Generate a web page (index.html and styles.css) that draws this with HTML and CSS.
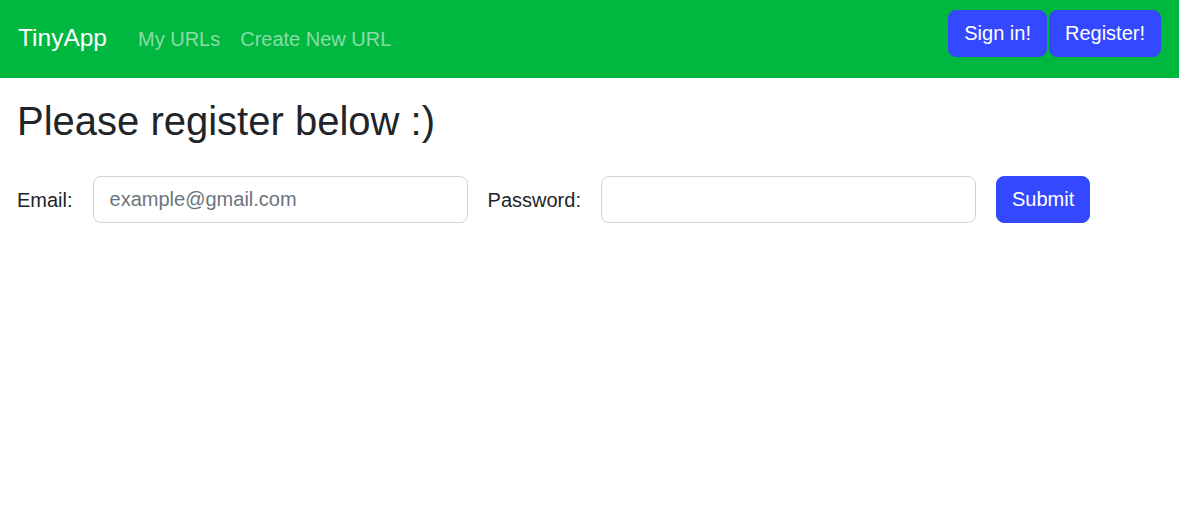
FILE: index.html
```html
<!DOCTYPE html>
<html lang="en">
<head>
<meta charset="utf-8">
<title>TinyApp</title>
<link rel="stylesheet" href="styles.css">
</head>
<body>
<nav class="navbar">
  <div class="nav-left">
    <a class="brand" href="#">TinyApp</a>
    <a class="nav-link" href="#">My URLs</a>
    <a class="nav-link" href="#">Create New URL</a>
  </div>
  <div class="nav-right">
    <button class="btn">Sign in!</button>
    <button class="btn">Register!</button>
  </div>
</nav>
<main class="main">
  <h1 class="title">Please register below :)</h1>
  <form class="reg-form">
    <label class="label" for="email">Email:</label>
    <input class="input" id="email" type="text" placeholder="example@gmail.com">
    <label class="label" for="password">Password:</label>
    <input class="input" id="password" type="password">
    <button class="btn" type="submit">Submit</button>
  </form>
</main>
</body>
</html>
```

FILE: styles.css
```css
* { box-sizing: border-box; }
html, body { margin: 0; padding: 0; }
body {
  font-family: "Liberation Sans", Arial, sans-serif;
  color: #212529;
  background: #fff;
  font-size: 16px;
}
.navbar {
  height: 78px;
  background: #00b73f;
  display: flex;
  justify-content: space-between;
  align-items: flex-start;
  padding: 0 18px;
}
.nav-left {
  display: flex;
  align-items: baseline;
  height: 78px;
  padding-top: 23px;
}
.brand {
  color: #fff;
  font-size: 24.5px;
  line-height: 30px;
  text-decoration: none;
  margin-right: 31px;
}
.nav-link {
  color: rgba(255, 255, 255, 0.55);
  font-size: 20px;
  line-height: 30px;
  text-decoration: none;
  margin-right: 20px;
}
.nav-right {
  display: flex;
  gap: 2px;
  margin-top: 10px;
}
.btn {
  font-family: "Liberation Sans", Arial, sans-serif;
  font-size: 20px;
  line-height: 29px;
  padding: 8px 15px;
  height: 47px;
  border: 1px solid #3348ff;
  border-radius: 8px;
  background: #3348ff;
  color: #fff;
  cursor: pointer;
}
.main {
  padding: 19px 17px 0;
}
.title {
  margin: 0;
  font-size: 40px;
  font-weight: 400;
  line-height: 48px;
}
.reg-form {
  display: flex;
  align-items: center;
  gap: 20px;
  margin-top: 31px;
}
.label {
  font-size: 20px;
  line-height: 30px;
}
.input {
  width: 375px;
  height: 47px;
  padding: 8px 16px;
  font-family: "Liberation Sans", Arial, sans-serif;
  font-size: 20px;
  color: #212529;
  border: 1px solid #ced4da;
  border-radius: 8px;
  background: #fff;
  outline: none;
}
.input::placeholder { color: #6c757d; }
```
